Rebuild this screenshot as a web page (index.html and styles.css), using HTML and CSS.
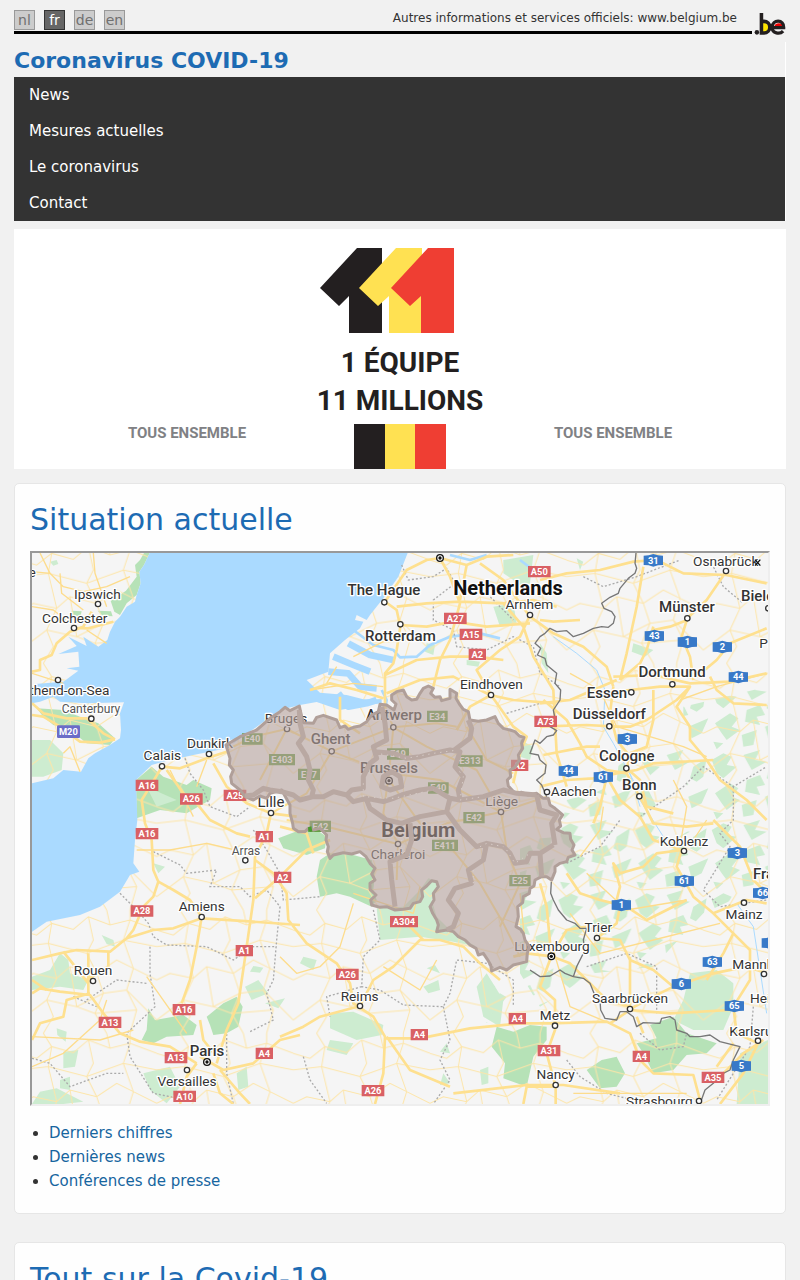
FILE: index.html
```html
<!DOCTYPE html>
<html lang="fr">
<head>
<meta charset="utf-8">
<meta name="viewport" content="width=device-width, initial-scale=1">
<title>Coronavirus COVID-19</title>
<link rel="stylesheet" href="styles.css">
</head>
<body>
<div class="page">
  <header>
    <div class="topbar">
      <div class="topline">
        <nav class="languages" aria-label="Langues">
          <a href="#nl">nl</a><a href="#fr" class="active">fr</a><a href="#de">de</a><a href="#en">en</a>
        </nav>
        <p class="official">Autres informations et services officiels: <a href="#belgium">www.belgium.be</a></p>
      </div>
      <svg class="belogo" viewBox="0 0 99 78" role="img" aria-label=".be">
        <circle cx="9" cy="68" r="7" fill="#231f20"/>
        <path d="M28 36a16 16 0 0 1 0 33z" fill="#ffe600"/>
        <path d="M62 50a16 16 0 0 1 30 0z" fill="#e00"/>
        <path d="M23 8v62h8a18 18 0 0 0 0-36h-7" fill="none" stroke="#231f20" stroke-width="11"/>
        <path d="M60 53h32c2-26-36-26-36-1 0 20 24 23 34 12" fill="none" stroke="#231f20" stroke-width="10"/>
      </svg>
    </div>
    <div class="brand">
      <h1>Coronavirus COVID-19</h1>
      <nav class="menu" aria-label="Menu principal">
        <a href="#news">News</a>
        <a href="#mesures">Mesures actuelles</a>
        <a href="#coronavirus">Le coronavirus</a>
        <a href="#contact">Contact</a>
      </nav>
    </div>
  </header>

  <div class="banner">
    <svg viewBox="0 0 772 240">
      <path fill="#231f20" d="M343 19h25v85h-33V67l-10 10-19-18z"/>
      <path fill="#ffe152" d="M382 19h26v85h-33V67l-11 10-19-18z"/>
      <path fill="#ef3e33" d="M414 19h26v85h-33V67l-11 10-19-18z"/>
      <path fill="#231f20" d="M340 195h31v45h-31z"/>
      <path fill="#ffe152" d="M371 195h30v45h-30z"/>
      <path fill="#ef3e33" d="M401 195h31v45h-31z"/>
      <text class="slogan" x="386" y="143">1 ÉQUIPE</text>
      <text class="slogan" x="386" y="181">11 MILLIONS</text>
      <text class="together" x="173" y="209">TOUS ENSEMBLE</text>
      <text class="together" x="599" y="209">TOUS ENSEMBLE</text>
    </svg>
  </div>

  <main>
    <section class="card">
      <h2>Situation actuelle</h2>
      <div class="map">
        <svg viewBox="36 39 2208 1653" preserveAspectRatio="xMidYMid slice" role="img" aria-label="Carte de la Belgique">
          <defs>
            <pattern id="lanes" width="410" height="370" patternUnits="userSpaceOnUse">
              <path class="lane" d="M0 60L50 75 95 40 160 58 205 20 270 45 330 30 410 60M0 210L40 190 110 205 150 170 230 190 290 150 340 175 410 210M70 0L95 40 85 100 110 205 80 270 100 320 70 370M205 20L220 90 200 130 230 190 250 250 225 310 260 370M330 30L310 90 340 175 320 240 350 300 330 370M0 330L80 270 170 290 250 250 320 240 410 330M260 0L270 45M330 0V30M85 100L200 130 310 90 410 110M0 110L85 100M150 170L170 290 225 310 350 300"/>
            </pattern>
            <pattern id="woods" width="230" height="210" patternUnits="userSpaceOnUse">
              <path fill="#cdecd0" d="M5 30L40 10 65 20 50 45 80 50 40 85 20 70zM100 15L150 0 135 30 170 35 125 60zM180 50L220 25 210 80 190 95 170 85zM15 130L60 100 85 115 65 140 90 150 50 180 35 160zM110 90L150 75 165 105 140 110 150 135 105 125zM165 140L225 115 205 160 175 175zM95 165L140 150 130 195 100 200zM10 185L40 190 20 208z"/>
            </pattern>
          </defs>
          <rect x="36" y="39" width="2208" height="1653" fill="#f5f5f5"/>

          <g class="forest">
            <path d="M372 39H389L372 75 358 95 362 130 350 165 320 190 300 225 283 215 272 183 318 152 350 110 345 75 360 60zM155 212l30 2-5 20-25-8zM233 212l40 2 5 15-30-2z"/>
            <path d="M50 505L130 510 180 530 235 550 285 595 270 615 200 610 150 570 100 555 70 530z"/>
            <path d="M348 720L395 680 430 710 500 735 520 720 575 745 570 780 500 820 420 810 350 835z"/>
            <path d="M900 960L930 940 1000 945 1055 960 1065 1000 1060 1050 1070 1080 1055 1100 990 1070 950 1060 900 1070 890 1010z"/>
            <path d="M775 895L840 870 890 870 920 890 915 925 860 945 790 925z"/>
            <path d="M385 1405L405 1440 490 1425 530 1455 520 1485 440 1490 400 1510 365 1500 380 1470zM560 1430L610 1390 650 1370 668 1400 655 1460 620 1480 580 1485 570 1455z"/>
            <path d="M1430 1460L1480 1475 1530 1455 1580 1460 1580 1500 1540 1550 1520 1640 1450 1615 1455 1570 1415 1520zM1700 1590L1745 1560 1790 1550 1815 1600 1790 1640 1740 1645z"/>
            <path d="M1890 1455L1960 1430 2000 1480 2090 1510 2060 1540 2000 1545 1960 1590 1900 1600 1870 1540 1850 1510 1910 1495z"/>
          </g>
          <g class="wood">
            <path d="M36 600L90 600 130 640 125 690 70 710 36 710zM90 65l20-5 5 12-15 5zM36 1310L90 1290 120 1240 145 1260 150 1300 205 1320 190 1350 120 1340 36 1350z"/>
            <path d="M1070 1105L1150 1100 1200 1050 1225 1015 1255 1025 1235 1080 1250 1130 1300 1180 1370 1220 1300 1205 1200 1190 1080 1200zM930 1420L1000 1415 1090 1455 1085 1485 1010 1500 930 1465z"/>
            <path d="M1450 60L1540 45 1530 130 1500 160 1480 120 1450 100zM1420 200l60-10 10 60-50 10zM1500 600l40 20-10 40-30-10zM1560 310l20 30 5 60-20-30z"/>
            <path d="M2010 1300L2090 1290 2140 1330 2140 1400 2110 1470 2020 1470 1960 1440 1990 1380zM2160 1540L2244 1500V1692H2150zM370 1600L450 1580 480 1640 440 1690 390 1650zM60 1655l50-10 80 40-60 7H36z"/>
            <path d="M380 740l90 40-60 20zM245 1185l35 15 5 20-25-8zM110 1465l30 10-3 30-25-20zM130 1535l45-5-10 50-35 5zM120 1620l30-10v40l-30-5zM675 1340l40-20 30 40-50 20zM700 1278l30 5-10 15-30-3zM850 1250l40 10-10 30-40-20zM650 1600l30-20 5 60-30 10zM735 1390l60-15-20 30zM930 1500l70 10-20 35-60-15zM1210 1340l45-20 5 30-35 10zM1260 1300l-40-15 25-10zM1280 1510l10 30-30-5zM1270 1600l20 30-30 5zM1370 1340l30-40 50 80-10 80-50-30zM1380 1590l25-10v50l-20 5zM400 970l35 10-20 20zM1840 310l60 20-25 20-40-15zM1670 55l20 10-10 25zM1340 360l40 5-5 15-35-5zM1220 310l25 5-5 30-25-10z"/>
          </g>
          <path fill="url(#woods)" d="M1990 500L2244 440V960L2160 900 2000 850 2000 700 1900 720 1850 640 1990 620zM1640 780L1720 760 1860 700 1960 900 2060 840 2244 900V1030L2050 1120 1900 1280 1720 1300 1560 1400 1500 1300 1500 900 1620 890zM1370 1290L1460 1370 1400 1450zM1800 640L1860 800 1780 800z"/>
          <path fill="url(#lanes)" d="M36 39H2244V1692H36z"/>

          <path class="sea" d="M389 39L372 75 358 95 362 130 350 165 345 185 320 200 300 230 285 245 270 275 262 300 235 320 190 290 200 318 145 290 170 318 115 342 175 335 178 380 140 385 175 392 130 425 45 432 36 455V490L60 485 100 470 120 485 200 490 312 487 300 520 303 570 300 595 270 615 225 640 205 655 183 695 130 690 100 715 36 730V1175L80 1145 180 1125 240 1100 300 1055 330 1005 358 995 340 970 345 900 352 840 348 720 395 675 430 665 520 645 620 625 780 510 840 495 890 486 960 510 1040 495 1085 490V478L1030 478 980 465 900 458 860 420 925 395 930 340 975 300 1020 265 1030 245 1005 240 1010 225 1040 240 1050 225 1090 175 1135 110 1163 39z"/>
          <g class="inlet">
            <path d="M925 395L985 400 1020 440 1070 445M940 350L1000 375 1050 395M985 310L1050 345 1120 360M955 460L985 500 1040 490 1070 480" stroke-width="20"/>
            <path d="M1000 270L1060 315 1120 330 1140 352 1190 350 1230 315 1290 290 1380 280 1440 295M1290 45L1350 60 1400 45M1500 60L1540 90M1085 450L1100 480 1095 510" stroke-width="8"/>
            <path d="M1600 290L1670 340 1730 390 1755 450 1750 560 1780 610 1850 740M2150 1090L2200 1160 2240 1420M1990 930L1930 890 1860 780M1860 800L1830 700M40 445L140 450M340 1692" stroke-width="3"/>
          </g>

          <path class="dash" d="M495 655L510 700 550 750 570 800 650 830 690 800M1145 75L1165 120 1240 110 1280 85 1305 130 1240 180 1240 240 1300 270 1310 320 1400 330 1480 290 1540 320 1560 400 1620 440M1300 130L1400 160 1480 240M1690 110L1750 140 1850 110 1980 60M2070 60L2110 140 2170 190M1460 520L1560 490M1860 830L1990 740 2050 680 2140 740 2240 680M2140 740V840L2100 880 2130 920 2050 1050 2100 1100 2240 1080M1640 970L1740 920 1800 840M400 935L480 975 500 1000 590 990 570 1040 660 1040 690 1070 740 1050 780 1100 770 1200 760 1320 740 1360 760 1440 690 1475M300 1060L350 1110 385 1150 400 1190 440 1215 560 1220 640 1260 700 1220 770 1220M390 1220L390 1300 405 1400 320 1480 330 1550 400 1660 500 1680M36 1555L90 1570 150 1640 260 1600 310 1600M700 870L740 930 780 1000 790 1080 900 1070M1060 1110L1080 1200 1030 1250 1025 1340 1080 1350 1150 1395 1270 1400 1290 1360 1310 1260 1400 1270 1480 1320 1480 1400M1270 1400L1290 1500 1260 1560 1290 1620 1240 1692M850 1550L870 1620 920 1690M1025 1340L920 1370 930 1430M620 1470V1600L640 1692M1700 1280L1820 1240 1910 1280 1910 1420M1860 1480L1920 1530 1990 1520 2000 1480M2200 1400L2190 1520 2090 1680M1640 1560L1680 1610 1760 1660 1880 1690M200 1380L290 1320 380 1330M160 1370L230 1400"/>

          <g class="road thin">
            <path d="M36 95L90 100 130 140 190 155 260 140 330 110M60 39L90 100M220 39L225 100 260 200M120 100L125 160 190 210M36 200L100 210 150 250M130 640L150 620 180 695M200 270L260 310M36 400L130 430M560 660L530 740M450 690L520 830M350 930L450 930 560 910 690 940M36 1580L130 1540 240 1440 260 1380M380 1310L500 1480M36 1490L240 1500 340 1470"/>
            <path d="M870 450L1000 430 1090 440M920 430L950 380M1000 350L1120 290M780 1250L830 1300 900 1280 960 1220 1000 1090M1000 1060L1180 1120 1200 1040M1090 1280L1200 1350 1250 1260M1500 1060L1520 1260M1650 400L1740 450 1790 560 1990 620 2060 650M1980 480L2090 440 2240 400M1700 1000L1820 1110 2000 1080M1650 1120L1740 1240 1900 1200 2100 1150M1960 720L2000 800 1980 920M1750 800L1740 870 1680 950M2060 840L2020 900M1600 1230L1650 1400 1770 1450M1660 1660L1840 1660 2000 1660"/>
          </g>
          <g class="road">
            <path d="M36 395L60 390 60 360 95 345 110 310 150 275 190 260 215 215M162 264L205 265 280 245M36 525L70 530 120 560 180 605 240 608 285 598M36 490L70 520 140 535 200 535 250 580 285 598"/>
            <path d="M426 680L480 685 560 655 620 635M426 680L390 740 365 780 375 850 395 900 400 990 415 1025 400 1070 370 1100 340 1170 320 1195 270 1235 170 1230 120 1240 36 1260M440 690L490 760 530 790 570 840 650 880 690 890M580 670L620 740 680 790 753 820 830 830M753 820L740 880 705 950 700 1080 680 1220 655 1390 620 1470 590 1570"/>
            <path d="M415 1025L460 1050 510 1080 545 1131 530 1220 510 1320 485 1390M320 1195L400 1170 460 1165 545 1135 700 1145 840 1155M36 1360L60 1345 120 1355 210 1365 250 1420 300 1480 360 1505 450 1520 530 1570M36 1500L60 1450 130 1430 140 1380 210 1360M705 960L760 1000 800 1060 805 1140 860 1210 950 1270 990 1330 1000 1390 1060 1430 1095 1490 1090 1600 1065 1692M705 1075L780 1010 860 930 930 900"/>
            <path d="M205 1360L205 1240M265 1235V1280L200 1320M130 1235L205 1330M36 1320L80 1350M540 1550L610 1590 700 1570 780 1500 840 1485M530 1570L500 1610 480 1692M580 1600L600 1660 640 1692M600 1590L660 1660 690 1692M540 1440L550 1500 590 1550M1095 1495L1200 1495 1350 1465 1500 1450 1590 1450 1760 1445 1830 1480 1860 1560 1900 1600 2020 1605 2040 1680"/>
            <path d="M780 860L860 880 880 940M1020 1398L900 1430 850 1460 780 1490M1020 1398L1060 1320 1120 1280 1200 1200 1260 1200 1330 1220 1380 1270 1440 1320M1160 1150L1210 1200M1100 1490L1170 1590 1290 1640M1300 1660L1520 1635 1630 1635 1800 1660"/>
          </g>
          <g class="road">
            <path d="M1095 185L1130 210 1141 260 1130 330 1120 370 1095 400 1095 520M1095 185L1160 90 1220 60 1260 54 1340 75 1400 50 1480 45M1260 54L1290 110 1320 190 1290 300 1260 360 1240 440M1130 200L1220 190 1320 185 1450 190 1540 180 1610 200M1141 255L1220 260 1300 245 1400 260 1530 250M1095 405L1190 360 1290 350 1370 350 1450 360M1100 460L1200 420 1300 410 1410 465 1480 480 1610 490M1413 465L1350 500 1310 570M1530 225L1500 290 1440 330 1370 390 1413 465 1480 560 1520 590 1500 640 1480 730M870 450L930 430 1010 450 1090 475M960 470L960 540 1020 580M1380 70L1450 120 1530 230 1600 280 1690 320 1760 380 1780 440M1340 75L1320 180M1450 190L1510 260 1540 350 1600 450 1610 640 1640 740"/>
            <path d="M1560 120L1640 100 1740 90 1840 65 1910 60 1990 100 2118 105 2240 130M1870 80L1850 200 1820 340 1800 420M2118 95L2060 180 2002 235 1985 290 2010 350 2020 420M1900 260L1880 330 1860 370 1800 420M2002 240L1950 260 1900 270M2240 265L2130 310 2090 360 2030 410M1560 240L1600 245 1680 240M1780 410L1900 405 2010 430 2130 425 2240 400M1730 460L1830 450 1920 440 2010 440 1970 480 1880 540 1830 560 1780 560M2070 410L2090 450 2140 490 2240 495M2010 440L1970 500 2010 560 2010 600 2060 660 2100 720 2180 780 2240 840"/>
            <path d="M1780 440L1770 520 1790 600 1830 650 1820 685 1860 720 1880 800 1960 820M1560 490L1650 480 1790 420M1560 560L1700 555 1790 560M1570 480L1640 540 1680 610 1700 650 1760 690 1820 700M1570 645L1700 620 1740 620M1560 740L1640 720 1720 715 1790 700 1850 690 1900 670 2080 660M1900 450V540L1880 620 1830 640M1760 710L1740 800 1720 850M1760 710L1800 780 1860 830M1820 700L1870 790 1900 850 2000 860 2080 850M2080 840L2160 920 2200 1020 2240 1060"/>
            <path d="M1860 830L1900 900 1985 930 1970 980 2020 1070 2080 1120 2180 1080 2240 1090M1985 930L1910 940 1870 980 1800 1000 1780 970 1800 1040 1790 1080M1640 1000L1680 1060 1740 1080 1820 1100 1880 1140 2000 1080M1731 1194L1790 1150 1800 1100M1731 1194L1800 1200 1830 1260 1900 1290 1960 1340 2080 1300 2180 1280 2240 1300M1830 1250L1830 1400 1760 1380 1700 1320M1830 1407L1900 1370 1960 1340M1830 1410L1950 1420 2130 1410M2080 1120L2140 1180 2110 1240 2060 1320M2140 1180L2190 1230 2190 1320 2140 1400 2150 1480 2214 1510 2170 1600 2100 1692M1594 1249L1650 1270 1700 1320M1594 1249L1560 1340 1605 1380 1605 1470 1580 1540 1607 1640 1607 1692M1594 1249L1520 1240 1480 1250M1770 1450L1830 1410M2230 1500L2170 1540 2110 1600"/>
            <path d="M1560 1030L1580 1100 1594 1249M1594 1249L1640 1170 1700 1160M1607 1640L1520 1640 1510 1692M1870 1480L1850 1430M2140 1510L2090 1580"/>
          </g>
          <g class="road inner">
            <path d="M620 630L700 590 800 567 935 634 1107 700 1260 720 1443 816 1581 770M753 820L860 760 935 634 1120 562 1250 550 1310 560M1107 700L1120 562 1095 500M720 720L800 567M800 840L920 860 1134 912 1280 850 1443 816M1107 700L1090 820 1134 912 1130 1020M1107 720L1200 850 1290 920 1380 1030 1450 1150 1500 1250M1443 816L1460 930 1500 1030 1440 1160M1120 562L1220 620 1370 690 1443 816M1340 560L1400 660 1480 700"/>
          </g>

          <path class="border" d="M1848 39L1845 70 1850 85 1845 100 1825 115 1800 145 1795 160 1770 172 1745 190 1752 205 1775 215 1785 230 1780 250 1765 262 1745 260 1720 265 1690 280 1660 290 1640 272 1610 275 1590 265 1575 280 1560 290 1545 310 1562 325 1552 345 1575 355 1580 375 1610 400 1605 430 1622 450 1620 480 1600 510 1605 535 1590 560 1610 572 1600 585 1580 590 1560 610 1545 600 1530 640 1555 645 1560 660 1578 675 1575 700 1550 720 1565 735 1580 770M1594 1025L1592 1060 1600 1080 1615 1110 1640 1140 1665 1150 1680 1165 1700 1165 1690 1200 1695 1230 1670 1280 1660 1310 1635 1300 1620 1290 1590 1308 1560 1310 1530 1290M1660 1310L1690 1315 1710 1330 1722 1360 1740 1380 1742 1410 1755 1435 1790 1440 1800 1415 1820 1415 1840 1430 1850 1460 1870 1448 1920 1450 1925 1435 1950 1430 1965 1440 1970 1470 2000 1480 2010 1490 2040 1490 2070 1485 2100 1505 2160 1520 2140 1560 2130 1590 2100 1605 2080 1630 2055 1650 2040 1692"/>

          <g class="shields">
            <path fill="#d96064" d="M347 719h68v34h-68zM480 760h68v34h-68zM611 749h68v34h-68zM347 864h68v34h-68zM707 873h52v34h-52zM762 995h52v34h-52zM332 1096h68v34h-68zM647 1215h52v34h-52zM458 1392h68v34h-68zM236 1430h68v34h-68zM434 1536h68v34h-68zM707 1523h52v34h-52zM460 1652h68v34h-68zM948 1286h68v34h-68zM1172 1467h52v34h-52zM1025 1635h68v34h-68zM1110 1128h84v34h-84zM1466 1419h52v34h-52zM1553 1515h68v34h-68zM1838 1532h52v34h-52zM2045 1595h68v34h-68zM1524 78h68v34h-68zM1272 218h68v34h-68zM1319 266h68v34h-68zM1346 326h52v34h-52zM1543 527h68v34h-68zM1473 659h52v34h-52z"/>
            <rect x="111" y="556" width="69" height="38" rx="4" fill="#6b6cc8"/>
            <path fill="#669d46" d="M666 580h62v34h-62zM747 642h78v34h-78zM834 686h66v34h-66zM1221 512h62v34h-62zM1101 625h66v34h-66zM1312 646h76v34h-76zM1224 727h62v34h-62zM869 842h64v34h-64zM1330 816h64v34h-64zM1236 899h78v34h-78zM1468 1005h64v34h-64z"/>
            <defs><path id="hex" fill="#3879c8" d="M-29-14L-14-15 0-19 14-15 29-14V14L14 15 0 19-14 15-29 14z"/></defs>
            <use href="#hex" x="1900" y="61"/><use href="#hex" x="1903" y="288"/><use href="#hex" x="2002" y="306"/><use href="#hex" x="2107" y="321"/><use href="#hex" x="2155" y="411"/><use href="#hex" x="1822" y="597"/><use href="#hex" x="1645" y="693"/><use href="#hex" x="1750" y="711"/><use href="#hex" x="2152" y="939"/><use href="#hex" x="1993" y="1023"/><use href="#hex" x="2228" y="1059"/><use href="#hex" x="1804" y="1095"/><use href="#hex" x="2077" y="1266"/><use href="#hex" x="1984" y="1332"/><use href="#hex" x="2143" y="1398"/><use href="#hex" x="2164" y="1578"/><use href="#hex" x="2254" y="1209"/>
            <text x="381" y="746">A16</text><text x="514" y="787">A26</text><text x="645" y="776">A25</text><text x="381" y="891">A16</text><text x="733" y="900">A1</text><text x="788" y="1022">A2</text><text x="366" y="1123">A28</text><text x="673" y="1242">A1</text><text x="492" y="1419">A16</text><text x="270" y="1457">A13</text><text x="468" y="1563">A13</text><text x="733" y="1550">A4</text><text x="494" y="1679">A10</text><text x="982" y="1313">A26</text><text x="1198" y="1494">A4</text><text x="1059" y="1662">A26</text><text x="1152" y="1155">A304</text><text x="1492" y="1446">A4</text><text x="1587" y="1542">A31</text><text x="1864" y="1559">A4</text><text x="2079" y="1622">A35</text><text x="1558" y="105">A50</text><text x="1306" y="245">A27</text><text x="1353" y="293">A15</text><text x="1372" y="353">A2</text><text x="1577" y="554">A73</text><text x="1499" y="686">A2</text><text x="145" y="586">M20</text>
            <text x="697" y="607">E40</text><text x="786" y="669">E403</text><text x="867" y="713">E17</text><text x="1252" y="539">E34</text><text x="1134" y="652">E19</text><text x="1350" y="673">E313</text><text x="1255" y="754">E40</text><text x="901" y="869">E42</text><text x="1362" y="843">E42</text><text x="1275" y="926">E411</text><text x="1500" y="1032">E25</text>
            <text x="1900" y="71">31</text><text x="1903" y="298">43</text><text x="2002" y="316">1</text><text x="2107" y="331">2</text><text x="2155" y="421">44</text><text x="1822" y="607">3</text><text x="1645" y="703">44</text><text x="1750" y="721">61</text><text x="2152" y="949">3</text><text x="1993" y="1033">61</text><text x="2228" y="1069">66</text><text x="1804" y="1105">1</text><text x="2077" y="1276">63</text><text x="1984" y="1342">6</text><text x="2143" y="1408">65</text><text x="2164" y="1588">5</text>
          </g>

          <defs>
            <circle id="town" r="8" fill="#fff" stroke="#333" stroke-width="4"/>
            <g id="capital"><circle r="10" fill="#fff" stroke="#111" stroke-width="4"/><circle r="5" fill="#111"/></g>
          </defs>
          <g>
            <use href="#town" x="234" y="192"/><use href="#town" x="162" y="264"/><use href="#town" x="114" y="420"/><use href="#town" x="214" y="536"/><use href="#town" x="426" y="679"/><use href="#town" x="567" y="642"/><use href="#town" x="801" y="567"/><use href="#town" x="753" y="819"/><use href="#town" x="935" y="634"/><use href="#town" x="1120" y="562"/><use href="#capital" x="1107" y="722"/><use href="#town" x="1443" y="816"/><use href="#town" x="1134" y="912"/><use href="#town" x="1413" y="465"/><use href="#town" x="1093" y="187"/><use href="#town" x="1141" y="253"/><use href="#town" x="1530" y="225"/><use href="#capital" x="1260" y="54"/><use href="#town" x="2118" y="93"/><use href="#town" x="2245" y="205"/><use href="#town" x="2002" y="235"/><use href="#town" x="1957" y="433"/><use href="#town" x="1834" y="457"/><use href="#town" x="1768" y="559"/><use href="#town" x="1819" y="685"/><use href="#town" x="1858" y="769"/><use href="#town" x="1581" y="756"/><use href="#town" x="676" y="961"/><use href="#town" x="545" y="1131"/><use href="#town" x="219" y="1323"/><use href="#capital" x="561" y="1566"/><use href="#town" x="501" y="1590"/><use href="#town" x="1020" y="1398"/><use href="#capital" x="1594" y="1249"/><use href="#town" x="1992" y="933"/><use href="#town" x="2172" y="1088"/><use href="#town" x="1731" y="1194"/><use href="#town" x="2232" y="1302"/><use href="#town" x="1830" y="1407"/><use href="#town" x="1605" y="1457"/><use href="#town" x="1607" y="1635"/><use href="#town" x="2214" y="1502"/><use href="#town" x="2037" y="1683"/>
          </g>
          <g class="labels">
            <text x="36" y="111">e</text><text x="232" y="178">Ipswich</text><text x="164" y="250">Colchester</text><text x="148" y="465">thend-on-Sea</text><text class="minor" x="213" y="519">Canterbury</text><text x="427" y="660">Calais</text><text x="570" y="625">Dunkirk</text><text x="798" y="548">Bruges</text><text class="mid" x="753" y="801">Lille</text><text class="city" x="932" y="612">Ghent</text><text class="city" x="1122" y="541">Antwerp</text><text class="city" x="1107" y="700">Brussels</text><text x="1445" y="797">Liège</text><text x="1134" y="958">Charleroi</text><text x="1414" y="447">Eindhoven</text><text class="city" x="1092" y="166">The Hague</text><text class="city" x="1141" y="304">Rotterdam</text><text x="1528" y="206">Arnhem</text><text x="2117" y="78">Osnabrück</text><text class="city" x="2001" y="217">Münster</text><text class="city" x="1956" y="411">Dortmund</text><text class="city" x="1761" y="475">Essen</text><text class="city" x="1768" y="537">Düsseldorf</text><text class="city" x="1820" y="664">Cologne</text><text class="city" x="1858" y="751">Bonn</text><text x="1661" y="769">Aachen</text><text class="minor" x="678" y="945">Arras</text><text x="545" y="1113">Amiens</text><text x="219" y="1305">Rouen</text><text class="city" x="561" y="1547">Paris</text><text x="501" y="1638">Versailles</text><text x="1019" y="1383">Reims</text><text x="1596" y="1233">Luxembourg</text><text x="1992" y="919">Koblenz</text><text x="2172" y="1137">Mainz</text><text x="1735" y="1176">Trier</text><text x="1830" y="1390">Saarbrücken</text><text x="1605" y="1440">Metz</text><text x="1607" y="1618">Nancy</text><text x="1918" y="1697">Strasbourg</text>
            <text class="country" x="1464" y="164">Netherlands</text><text class="country" x="1195" y="891">Belgium</text>
            <g class="edge"><text class="city" x="2163" y="184">Bielefeld</text><text x="2218" y="325">Paderborn</text><text class="city" x="2199" y="1017">Frankfurt</text><text x="2137" y="1287">Mannheim</text><text x="2190" y="1390">Heidelberg</text><text x="2128" y="1488">Karlsruhe</text></g>
          </g>

          <g transform="translate(600 420)">
            <path class="belgium" d="M18 195L60 170 110 150 150 115 180 95 195 82 210 92 238 78 245 110 250 128 280 130 290 112 310 106 350 120 360 143 375 138 385 148 400 142 420 138 440 125 455 105 475 95 480 73 500 75 522 90 528 72 515 60 515 45 530 35 550 30 560 50 575 60 590 58 600 40 610 25 625 18 640 25 632 40 645 52 660 50 665 62 690 55 690 28 710 40 708 55 718 72 730 88 745 95 750 120 775 124 800 120 825 110 835 130 850 145 870 150 885 155 898 168 912 172 905 190 908 205 895 225 898 240 885 262 870 270 872 290 862 300 865 318 885 340 905 337 925 345 950 340 970 355 985 355 990 375 1005 385 1028 405 1018 420 1022 438 1010 448 1030 458 1050 460 1052 478 1062 495 1056 510 1065 525 1045 532 1040 545 1020 550 1005 560 1005 575 995 600 980 590 965 590 945 600 942 618 930 625 928 640 910 650 908 668 893 680 895 710 888 740 902 748 910 760 915 780 928 800 922 820 920 845 900 850 880 855 860 870 840 862 815 873 812 855 802 838 790 820 775 825 768 805 750 795 735 780 715 770 700 755 680 750 650 755 655 735 650 720 638 700 630 680 642 660 640 640 655 620 650 605 635 602 620 618 605 630 608 650 600 665 580 670 570 685 550 688 525 690 500 680 480 682 455 675 452 660 468 645 450 628 450 610 465 600 455 582 465 565 450 550 438 530 420 515 395 522 370 518 340 525 330 535 322 515 325 500 318 480 320 465 300 445 280 450 265 445 255 455 235 455 220 445 218 430 210 400 210 375 185 330 150 340 140 355 120 348 100 360 75 350 60 330 35 310 32 290 40 270 28 255 30 235z"/>
            <path class="province" d="M238 90L240 130 250 170 235 190 260 230 270 270 265 300 280 330 275 350M75 348L100 345 130 325 150 330 185 335 220 345 240 360 280 350 310 350 340 335 380 345 395 330 430 325 430 290 450 250 470 235 460 200 500 180 495 130 485 80M460 215L520 220 560 235 600 230 640 220 690 210 720 215 705 260 730 290 715 330 720 360M700 212L750 175 755 145 745 120M380 345L400 365 440 355 490 365 520 355 545 345 600 330 640 325 690 355 720 360 790 350 850 330 890 340 950 345M490 290L515 275 540 290 545 320 510 330 485 320zM440 360L450 385 500 420 545 430 600 410 680 395 690 355M570 430L575 480 560 525 510 545 515 600 525 680M680 395L720 450 770 500 800 490 850 500 870 520 885 550 920 545 930 520 960 520 1000 495M960 520L965 590M800 490L790 540 745 570 755 610 705 625 685 660 715 700 700 740 680 750M950 345L960 390 1010 405 995 430 1005 495"/>
            <path class="beads" d="M700 212L640 220 560 235 470 220M720 240L715 270 730 290 720 360 790 350M430 310L430 350 520 355 640 330M545 480V520M860 510L885 550 930 520M780 500L800 490 850 500M760 570V610"/>
            <path fill="#4a9a2f" d="M264 442l10-3 3 15-12 2z"/>
          </g>
          <path d="M2205 59l16 18m0-18l-16 18" stroke="#111" stroke-width="4"/>
        </svg>
      </div>
      <ul class="links">
        <li><a href="#chiffres">Derniers chiffres</a></li>
        <li><a href="#dernieres-news">Dernières news</a></li>
        <li><a href="#presse">Conférences de presse</a></li>
      </ul>
    </section>
    <section class="card">
      <h2>Tout sur la Covid-19</h2>
    </section>
  </main>
</div>
</body>
</html>
```

FILE: styles.css
```css
* {
  box-sizing: border-box;
}

body {
  margin: 0;
  background: #f1f1f1;
  color: #333;
  font: 15px/24px "DejaVu Sans", sans-serif;
}

a {
  color: inherit;
  text-decoration: none;
}

.page {
  padding: 10px 14px 0;
}

.topbar {
  display: flex;
  gap: 2px;
}

.topline {
  flex: 1;
  display: flex;
  justify-content: space-between;
  height: 24px;
  padding-right: 15px;
  border-bottom: 3px solid #000;
}

.languages {
  display: flex;
  gap: 9px;
}

.languages a {
  width: 21px;
  height: 20px;
  border: 1px solid #999;
  background: #ccc;
  color: #707070;
  font-size: 14px;
  line-height: 19px;
  text-align: center;
}

.languages .active {
  border-color: #333;
  background: #666;
  color: #fff;
}

.official {
  margin: 0;
  font-size: 12px;
  line-height: 16px;
}

.belogo {
  width: 32px;
  height: 26px;
}

.brand {
  margin-top: 6px;
  border-right: 1px solid #fff;
}

h1 {
  margin: 0;
  padding-top: 3px;
  color: #1d6bb3;
  font-size: 22px;
  line-height: 32px;
}

.menu {
  background: #333;
  color: #fff;
}

.menu a {
  display: block;
  padding: 0 15px;
  line-height: 36px;
}

.banner {
  margin-top: 8px;
  background: #fff;
}

.banner svg {
  display: block;
  width: 100%;
}

.banner text {
  font-family: Roboto, sans-serif;
  font-weight: 700;
  text-anchor: middle;
}

.slogan {
  fill: #231f20;
  font-size: 28px;
}

.together {
  fill: #808184;
  font-size: 15px;
}

.card {
  margin: 14px 0 28px;
  padding: 18px 15px 20px;
  border: 1px solid #e6e6e6;
  border-radius: 5px;
  background: #fefefe;
}

h2 {
  margin: 0 0 13px;
  color: #1d6bb3;
  font-size: 30px;
  font-weight: 400;
  line-height: 36px;
}

.map {
  border: 2px solid;
  border-color: #999 #eee #eee #999;
}

.map svg {
  display: block;
  width: 100%;
  overflow: hidden;
}

.lane {
  fill: none;
  stroke: #fde5a8;
  stroke-width: 3;
}

.sea {
  fill: #aadaff;
}

.inlet {
  fill: none;
  stroke: #aadaff;
  stroke-linejoin: round;
}

.forest {
  fill: #b6e2b7;
}

.wood {
  fill: #cdecd0;
}

.road {
  fill: none;
  stroke: #fee08f;
  stroke-width: 8;
  stroke-linejoin: round;
}

.thin {
  stroke: #fddc8c;
  stroke-width: 4;
}

.inner {
  stroke-width: 6;
}

.dash {
  fill: none;
  stroke: #aaa;
  stroke-width: 4;
  stroke-dasharray: 6 6;
}

.border {
  fill: none;
  stroke: #777;
  stroke-width: 4;
  stroke-linejoin: round;
}

.shields text {
  fill: #fff;
  font: 700 28px Roboto, sans-serif;
  text-anchor: middle;
}

.labels text {
  fill: #333;
  stroke: #fff;
  stroke-width: 8;
  stroke-linejoin: round;
  paint-order: stroke;
  font: 400 41px Roboto, sans-serif;
  text-anchor: middle;
}

.labels .minor {
  fill: #555;
  font-size: 36px;
}

.labels .city {
  font-size: 45px;
  font-weight: 500;
}

.labels .mid {
  font-size: 45px;
}

.labels .country {
  fill: #111;
  font-size: 60px;
  font-weight: 700;
}

.labels .edge text {
  text-anchor: start;
}

.belgium {
  fill: #b6a29d;
  fill-opacity: .6;
  stroke: #b09f99;
  stroke-width: 9;
  stroke-linejoin: round;
}

.province {
  fill: none;
  stroke: #b9a8a2;
  stroke-width: 15;
  stroke-linejoin: round;
}

.beads {
  fill: none;
  stroke: #d8cdc9;
  stroke-width: 3;
  stroke-dasharray: 4 14;
}

.links {
  margin: 15px 0 0;
  padding-left: 19px;
}

.links a {
  color: #16659f;
}
```
